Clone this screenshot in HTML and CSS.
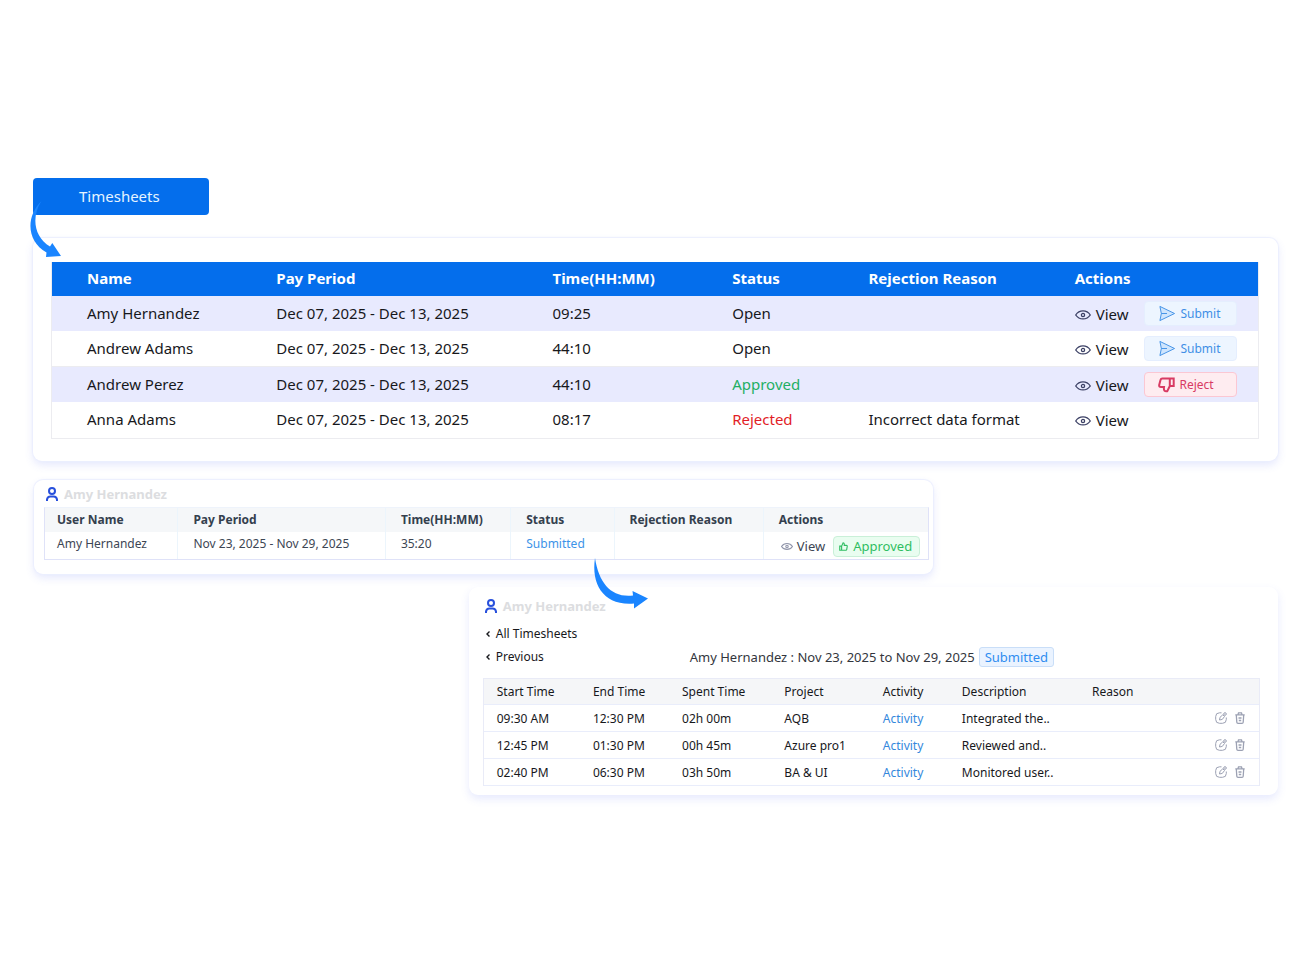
FILE: index.html
```html
<!DOCTYPE html>
<html lang="en">
<head>
<meta charset="utf-8">
<meta name="viewport" content="width=device-width, initial-scale=1">
<title>Timesheets</title>
<link rel="stylesheet" href="styles.css">
</head>
<body>
<svg class="sprite" aria-hidden="true">
  <symbol id="eye" viewBox="0 0 16 12"><path d="M.7 6C4.300.6 11.700.6 15.300 6 11.700 11.200 4.300 11.200.7 6Z"/><circle cx="8" cy="6" r="1.600"/></symbol>
  <symbol id="send" viewBox="0 0 18 18"><path d="M1.500 1.500 17 9 1.500 16.500 3 9Z"/><path d="M3 9H9"/></symbol>
  <symbol id="thumb-down" viewBox="0 0 17 16"><path d="M4.300 1.500H15.700V9H11.800L9.300 14.200Q5.200 15 6 10H3Q.9 10 1.200 8L2.500 2.900Q2.900 1.500 4.300 1.500ZM11.800 1.500V9"/></symbol>
  <symbol id="thumb-up" viewBox="0 0 24 24"><path d="M7 11v11H2V11zM7 11l4-9a3 3 0 0 1 3 3v4h6a2 2 0 0 1 2 2.300l-1.500 9a2 2 0 0 1-2 1.700H7"/></symbol>
  <symbol id="user" viewBox="0 0 12 14"><circle cx="6" cy="4" r="3"/><path d="M1 14v-1.500A3.500 3.500 0 0 1 4.500 9.500h3A3.500 3.500 0 0 1 11 12.500V14"/></symbol>
  <symbol id="chevron" viewBox="0 0 4 6"><path d="M3.500.5 1 3l2.500 2.500"/></symbol>
  <symbol id="edit" viewBox="0 0 12 12"><path d="M6.500.8H4.500Q.7.8.7 4.500v3Q.7 11.300 4.500 11.300h3Q11.300 11.300 11.300 7.500V5.500"/><path d="M4.500 8 5 5.300 7.800 2.800 9.500 4.500 7.300 7.400Z"/><circle cx="10" cy="2" r="1.300"/></symbol>
  <symbol id="trash" viewBox="0 0 10 12"><path d="M.3 2.800H9.700M3 2.600 3.500.8h3L7 2.600M1.300 3 1.800 10.200Q1.900 11.300 3 11.300H7Q8.100 11.300 8.200 10.200L8.700 3M3.500 6H6.500M3.800 8.500H6.200"/></symbol>
</svg>
<main class="page">
  <div class="launch">
    <button class="launch-button" type="button">Timesheets</button>
    <svg class="arrow arrow-down" viewBox="0 0 32 56" aria-hidden="true"><path d="M11.500 1C-4 16-4 41 16.500 52.500L16 57 31 56 22.300 43 20 46.500C4 37 1 17 11.500 1Z"/></svg>
  </div>

  <section class="card card-all">
    <table class="sheets">
      <colgroup><col class="c-name"><col class="c-period"><col class="c-time"><col class="c-status"><col class="c-reason"><col></colgroup>
      <thead><tr><th>Name</th><th>Pay Period</th><th>Time(HH:MM)</th><th>Status</th><th>Rejection Reason</th><th>Actions</th></tr></thead>
      <tbody>
        <tr><td>Amy Hernandez</td><td>Dec 07, 2025 - Dec 13, 2025</td><td>09:25</td><td>Open</td><td></td><td><div class="actions"><button class="view" type="button"><svg><use href="#eye"/></svg>View</button><button class="pill submit" type="button"><svg><use href="#send"/></svg>Submit</button></div></td></tr>
        <tr><td>Andrew Adams</td><td>Dec 07, 2025 - Dec 13, 2025</td><td>44:10</td><td>Open</td><td></td><td><div class="actions"><button class="view" type="button"><svg><use href="#eye"/></svg>View</button><button class="pill submit" type="button"><svg><use href="#send"/></svg>Submit</button></div></td></tr>
        <tr><td>Andrew Perez</td><td>Dec 07, 2025 - Dec 13, 2025</td><td>44:10</td><td class="approved">Approved</td><td></td><td><div class="actions"><button class="view" type="button"><svg><use href="#eye"/></svg>View</button><button class="pill reject" type="button"><svg><use href="#thumb-down"/></svg>Reject</button></div></td></tr>
        <tr><td>Anna Adams</td><td>Dec 07, 2025 - Dec 13, 2025</td><td>08:17</td><td class="rejected">Rejected</td><td>Incorrect data format</td><td><div class="actions"><button class="view" type="button"><svg><use href="#eye"/></svg>View</button></div></td></tr>
      </tbody>
    </table>
  </section>

  <section class="card card-user">
    <h2 class="person"><svg><use href="#user"/></svg>Amy Hernandez</h2>
    <table class="user-sheet">
      <colgroup><col class="u-name"><col class="u-period"><col class="u-time"><col class="u-status"><col class="u-reason"><col></colgroup>
      <thead><tr><th>User Name</th><th>Pay Period</th><th>Time(HH:MM)</th><th>Status</th><th>Rejection Reason</th><th>Actions</th></tr></thead>
      <tbody><tr><td>Amy Hernandez</td><td>Nov 23, 2025 - Nov 29, 2025</td><td>35:20</td><td class="submitted">Submitted</td><td></td><td><div class="actions"><button class="view" type="button"><svg><use href="#eye"/></svg>View</button><button class="approve" type="button"><svg><use href="#thumb-up"/></svg>Approved</button></div></td></tr></tbody>
    </table>
    <svg class="arrow arrow-right" viewBox="0 0 56 52" aria-hidden="true"><path d="M2 1C-2 28 11 49 41 46.500V51.500L55 41.500 39.500 34 40 38.500C19 41 6 27 2 1Z"/></svg>
  </section>

  <section class="card card-detail">
    <h2 class="person"><svg><use href="#user"/></svg>Amy Hernandez</h2>
    <nav class="links">
      <a href="#all"><svg><use href="#chevron"/></svg>All Timesheets</a>
      <a href="#previous"><svg><use href="#chevron"/></svg>Previous</a>
      <p class="range">Amy Hernandez : Nov 23, 2025 to Nov 29, 2025 <span class="badge">Submitted</span></p>
    </nav>
    <table class="entries">
      <colgroup><col class="e-start"><col class="e-end"><col class="e-spent"><col class="e-project"><col class="e-activity"><col class="e-desc"><col class="e-reason"><col></colgroup>
      <thead><tr><th>Start Time</th><th>End Time</th><th>Spent Time</th><th>Project</th><th>Activity</th><th>Description</th><th>Reason</th><td></td></tr></thead>
      <tbody>
        <tr><td>09:30 AM</td><td>12:30 PM</td><td>02h 00m</td><td>AQB</td><td><a href="#activity">Activity</a></td><td>Integrated the..</td><td></td><td><div class="tools"><button type="button" aria-label="Edit"><svg class="edit"><use href="#edit"/></svg></button><button type="button" aria-label="Delete"><svg class="trash"><use href="#trash"/></svg></button></div></td></tr>
        <tr><td>12:45 PM</td><td>01:30 PM</td><td>00h 45m</td><td>Azure pro1</td><td><a href="#activity">Activity</a></td><td>Reviewed and..</td><td></td><td><div class="tools"><button type="button" aria-label="Edit"><svg class="edit"><use href="#edit"/></svg></button><button type="button" aria-label="Delete"><svg class="trash"><use href="#trash"/></svg></button></div></td></tr>
        <tr><td>02:40 PM</td><td>06:30 PM</td><td>03h 50m</td><td>BA &amp; UI</td><td><a href="#activity">Activity</a></td><td>Monitored user..</td><td></td><td><div class="tools"><button type="button" aria-label="Edit"><svg class="edit"><use href="#edit"/></svg></button><button type="button" aria-label="Delete"><svg class="trash"><use href="#trash"/></svg></button></div></td></tr>
      </tbody>
    </table>
  </section>
</main>
</body>
</html>
```
FILE: styles.css
```css
* { box-sizing: border-box; }
body {
  margin: 0;
  background: #fff;
  color: #17181c;
  font-family: "Noto Sans", "Open Sans", sans-serif;
  font-size: 12px;
}
.sprite { position: absolute; width: 0; height: 0; }
svg { flex: none; fill: none; stroke: currentColor; }
button {
  margin: 0;
  padding: 0;
  border: 0;
  background: none;
  color: inherit;
  font: inherit;
  cursor: pointer;
}
a { color: inherit; text-decoration: none; }
h2, p { margin: 0; }
table { width: 100%; table-layout: fixed; border-collapse: separate; border-spacing: 0; }
th, td { padding: 0; text-align: left; white-space: nowrap; }

.page {
  display: flex;
  flex-direction: column;
  padding: 178px 22px 40px 33px;
}
.launch { position: relative; margin-bottom: 23px; }
.launch-button {
  display: block;
  height: 37px;
  padding: 0 49px 2px 46px;
  border-radius: 4px;
  background: #046eec;
  color: #e6f4ff;
  font-size: 15px;
}
.arrow { position: absolute; z-index: 1; fill: #1a85ff; stroke: none; overflow: visible; }
.arrow-down { left: -3px; top: 22px; width: 32px; height: 56px; }
.arrow-right { left: 559px; top: 77px; width: 56px; height: 52px; }

.card {
  position: relative;
  border-radius: 9px;
  background: #fff;
  box-shadow: 0 0 1px 1px #eceffe, 0 4px 9px rgba(91, 112, 245, .16);
}
.card-all { padding: 24px 19px 22px 18px; }
.card-user { width: 72.200%; margin: 19px 0 0 1px; padding: 5px 4px 14px 10px; }
.card-detail {
  width: 65%;
  margin: 13px 0 0 auto;
  padding: 10px 18px 9px 14px;
  box-shadow: 0 4px 9px rgba(91, 112, 245, .15);
}

.sheets { font-size: 15px; border: 1px solid #ececf0; border-top: 0; }
.sheets th { height: 34px; padding-bottom: 2px; background: #046eec; color: #fff; }
.sheets td { height: 35px; padding-bottom: 2px; }
.sheets td:last-child { padding-bottom: 0; }
.sheets th:first-child, .sheets td:first-child { padding-left: 35px; }
.sheets tbody tr:nth-child(odd) { background: #e8eafe; }
.sheets tbody tr:nth-child(even) td { height: 36px; }
.sheets tbody tr:nth-child(2) td { border-bottom: 1px solid #ececf0; }
.c-name { width: 18.600%; }
.c-period { width: 22.900%; }
.c-time { width: 14.900%; }
.c-status { width: 11.300%; }
.c-reason { width: 17.100%; }

.actions { display: flex; align-items: center; }
.view { display: flex; align-items: center; gap: 5px; }
.sheets .view svg { width: 16px; height: 12px; margin-top: 2px; color: #3c4165; stroke-width: 1.300; }
.sheets .view { margin-right: 16px; }
.pill {
  display: flex;
  align-items: center;
  gap: 4px;
  width: 93px;
  height: 25px;
  padding-left: 13px;
  border: 1px solid #e5eefe;
  border-radius: 4px;
  font-size: 12px;
}
.submit { background: #edf5ff; color: #3f8fe6; }
.submit svg { width: 18px; height: 17px; fill: #cfe5fd; }
.reject { border-color: #fbc7d3; background: #feecf0; color: #d83b63; }
.reject svg { width: 17px; height: 16px; stroke-width: 2; }
.approved { color: #1faf64; }
.rejected { color: #e21d27; }

.person { display: flex; align-items: center; gap: 6px; color: #dcdde0; font-size: 13px; line-height: 18px; }
.person svg { width: 12px; height: 14px; color: #2850dc; stroke-width: 2; }
.card-user .person { padding-left: 2px; margin-bottom: 4px; }
.card-detail .person { padding-left: 2px; margin-bottom: 9px; }

.user-sheet { border: 1px solid #dfe2f8; border-top-color: #eef3fb; color: #3d4654; }
.user-sheet th { height: 24px; padding-bottom: 2px; background: #f5f7f9; color: #34404e; }
.user-sheet td { height: 27px; padding-bottom: 4px; }
.user-sheet th, .user-sheet td { padding-left: 15px; border-left: 1px solid #ecf5fc; }
.user-sheet th:first-child, .user-sheet td:first-child { padding-left: 12px; border-left: 0; }
.user-sheet td:last-child { padding: 1px 0 0 17px; }
.u-name { width: 15%; }
.u-period { width: 23.500%; }
.u-time { width: 14.200%; }
.u-status { width: 11.700%; }
.u-reason { width: 16.900%; }
.submitted { color: #3d93e8; }
.user-sheet .view { gap: 4px; margin-right: 8px; font-size: 13px; }
.user-sheet .view svg { width: 12px; height: 9px; color: #9095aa; stroke-width: 1.500; }
.approve {
  display: flex;
  align-items: center;
  gap: 5px;
  height: 21px;
  padding: 0 7px 0 5px;
  border: 1px solid #c9f0d8;
  border-radius: 4px;
  background: #e9fdf0;
  color: #2fbd62;
  font-size: 13px;
}
.approve svg { width: 9px; height: 9px; stroke-width: 3; }

.links { display: grid; grid-template-columns: 204px 1fr; row-gap: 4px; padding-left: 3px; margin-bottom: 11px; }
.links a { display: flex; align-items: center; gap: 6px; height: 19px; }
.links a:first-child { grid-column: 1 / -1; }
.links svg { width: 4px; height: 6px; stroke-width: 1.400; }
.range { display: flex; align-items: center; gap: 4px; height: 20px; color: #33363d; font-size: 13px; white-space: nowrap; }
.badge {
  height: 20px;
  padding: 0 5px;
  border: 1px solid #c9def8;
  border-radius: 3px;
  background: #eaf3ff;
  color: #2f8df0;
  line-height: 18px;
}

.entries { border: 1px solid #e9ebf7; border-bottom: 0; }
.entries th { font-weight: 400; }
.entries thead { background: #f5f6f8; }
.entries th, .entries td { height: 27px; padding-left: 13px; border-bottom: 1px solid #e9edfb; }
.entries thead th, .entries thead td { height: 26px; }
.entries td:last-child { padding-left: 14px; }
.entries a { color: #3488dc; }
.e-start { width: 12.400%; }
.e-end { width: 11.500%; }
.e-spent { width: 13.200%; }
.e-project { width: 12.700%; }
.e-activity { width: 10.200%; }
.e-desc { width: 16.800%; }
.e-reason { width: 15.700%; }
.tools { display: flex; align-items: center; gap: 8px; color: #9ca1b3; }
.tools button { display: flex; }
.tools .edit { width: 12px; height: 12px; }
.tools .trash { width: 10px; height: 12px; stroke-width: 1.300; }
```
